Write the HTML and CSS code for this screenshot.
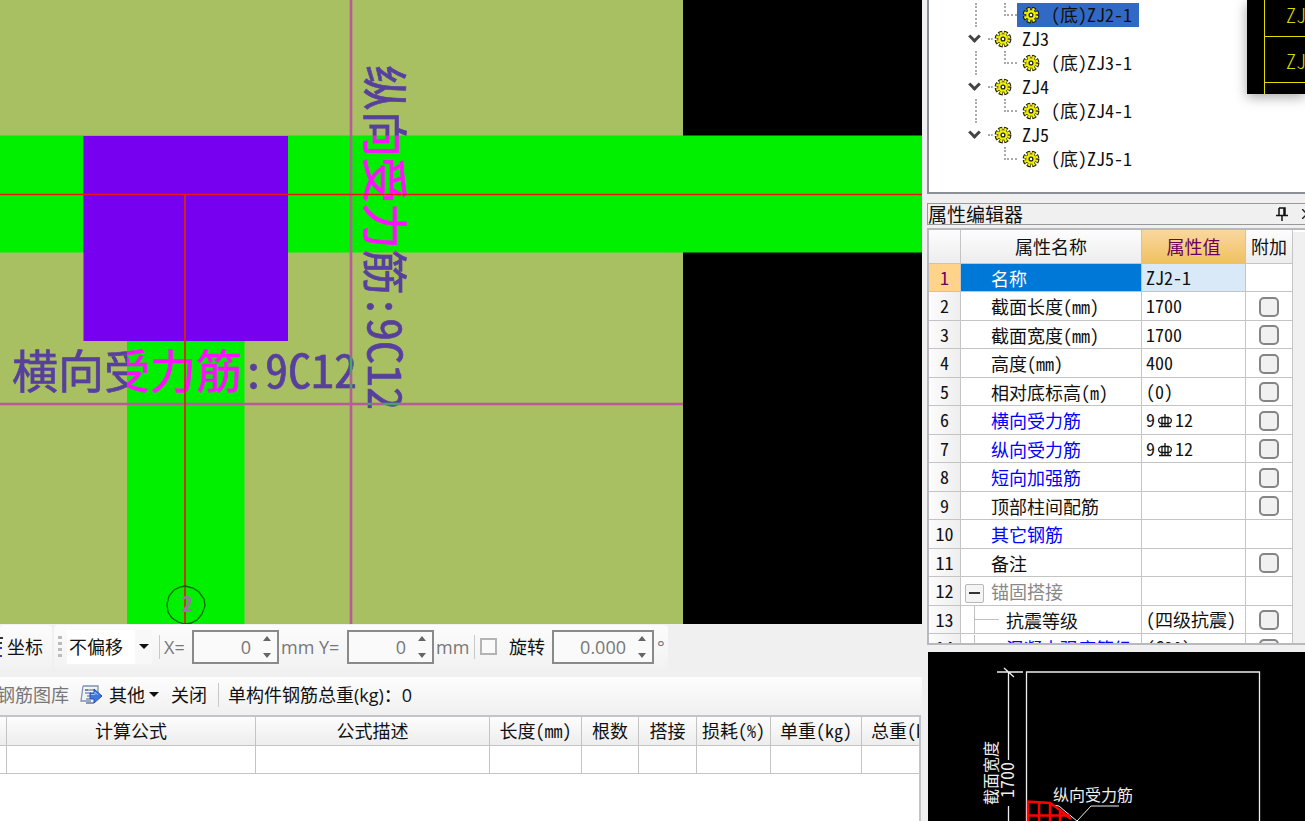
FILE: index.html
```
<!DOCTYPE html>
<html lang="zh-CN">
<head>
<meta charset="utf-8">
<title>属性编辑器</title>
<link rel="stylesheet" href="styles.css">
</head>
<body>
<svg class="defs" aria-hidden="true">
  <symbol id="gear" viewBox="0 0 18 18">
    <circle cx="9" cy="9" r="6.4" fill="none" stroke="#1c1c00" stroke-width="4" stroke-dasharray="3.600 1.426"/>
    <circle cx="9" cy="9" r="5.200" fill="#f0f000" stroke="#2c2c00" stroke-width=".7"/>
    <circle cx="9" cy="9" r="5.900" fill="none" stroke="#f4f400" stroke-width="2.800" stroke-dasharray="2.200 2.434" stroke-dashoffset="-.6"/>
    <circle cx="9" cy="9" r="1.900" fill="#fff" stroke="#222" stroke-width="1.300"/>
  </symbol>
  <symbol id="rebar" viewBox="0 0 16 16">
    <path d="M8 1v13M5 4v10M11 4v10M2 13.500h12M4 4.500h8q2.500 1 2.500 3t-2.500 3H4q-2.500-1-2.500-3t2.500-3" fill="none" stroke="#111" stroke-width="1.300"/>
  </symbol>
  <symbol id="spin" viewBox="0 0 10 24">
    <path d="M1 6l4-5 4 5zM1 18l4 5 4-5z" fill="#666"/>
  </symbol>
</svg>
<div class="app">
  <main class="work">
    <svg class="plan" viewBox="0 0 922 624" preserveAspectRatio="xMinYMin slice" role="img" aria-label="平面图">
      <rect width="922" height="624" fill="#000"/>
      <rect width="683" height="624" fill="#a8bf62"/>
      <path d="M0 135.500h922v117H0zM127 252h117.500v372H127z" fill="#00f000"/>
      <path d="M351 0v624M0 404h683" stroke="#b85a9c" stroke-width="2.600"/>
      <rect x="83.500" y="136" width="204.500" height="205" fill="#7800f0"/>
      <g class="invert">
        <text class="plan-text" x="12" y="388">横向受力筋:9C12</text>
        <text class="plan-text" transform="translate(368 65) rotate(90)">纵向受力筋:9C12</text>
      </g>
      <path d="M0 194.500h922" stroke="#f01414" stroke-width="1.600"/>
      <path d="M185 195v429" stroke="#d22a10" stroke-width="1.800"/>
      <path d="M185 586l8 2 6 4 5 7 1 7-3 8-5 6-6 3-6 1-7-2-6-4-4-6-1-8 2-8 5-6 6-3z" fill="none" stroke="#006800" stroke-width="1.300"/>
      <text class="axis-text" x="187" y="612">2</text>
    </svg>
    <div class="bar offset-bar">
      <div class="group first">
        <svg class="cut" viewBox="0 0 3 20"><path d="M0 1h3M0 6h2" stroke="#333" stroke-width="2"/><path d="M0 11h2M0 19h2" stroke="#33d" stroke-width="2"/></svg>
        <button class="txt">坐标</button>
      </div>
      <div class="group second">
        <i class="grip"></i>
        <span class="combo"><select aria-label="偏移方式"><option>不偏移</option></select><i class="down"></i></span>
        <i class="sep"></i>
        <label class="unit x" for="dx">X=</label>
        <span class="spin"><input id="dx" value="0"><svg><use href="#spin"/></svg></span>
        <span class="unit mm">mm</span>
        <label class="unit y" for="dy">Y=</label>
        <span class="spin"><input id="dy" value="0"><svg><use href="#spin"/></svg></span>
        <span class="unit mm">mm</span>
        <i class="sep late"></i>
        <input class="rot" type="checkbox" id="rot"><label class="rot-label" for="rot">旋转</label>
        <span class="spin wide"><input aria-label="角度" value="0.000"><svg><use href="#spin"/></svg></span>
        <span class="unit deg">°</span>
      </div>
    </div>
    <div class="bar lib-bar">
      <button class="txt off">钢筋图库</button>
      <svg class="export" viewBox="0 0 22 20"><path d="M3 1h15v7M3 1L1 16h10" fill="#eef2f8" stroke="#7f93ae" stroke-width="1.300"/><path d="M5 5h9M5 8h6M7 11h4M6 14h4" stroke="#8092ac" stroke-width="1.500"/><path d="M5 5h3M6 18h8" stroke="#647a9c" stroke-width="1.500"/><path d="M10 8h4V4l8 7-8 7v-4h-4z" fill="#3f78dc" stroke="#2450ae"/><path d="M11 9.500h4V7l3 3" fill="none" stroke="#9fc2f5"/></svg>
      <button class="txt">其他</button><i class="down menu"></i>
      <button class="txt close">关闭</button>
      <i class="sep"></i>
      <span class="total">单构件钢筋总重(kg)：0</span>
    </div>
    <div class="sheet-frame">
      <table class="sheet">
        <colgroup><col class="c0"><col class="c1"><col class="c2"><col class="c3"><col class="c4"><col class="c5"><col class="c6"><col class="c7"><col></colgroup>
        <thead><tr><th></th><th>计算公式</th><th>公式描述</th><th>长度(mm)</th><th>根数</th><th>搭接</th><th>损耗(%)</th><th>单重(kg)</th><th class="cutoff">总重(kg)</th></tr></thead>
        <tbody><tr><td></td><td></td><td></td><td></td><td></td><td></td><td></td><td></td><td></td></tr></tbody>
      </table>
    </div>
  </main>
  <aside class="side">
    <section class="tree-panel">
      <ul class="tree">
        <li class="node"><i class="arrow"></i><i class="dots"></i><svg class="gear"><use href="#gear"/></svg><span>ZJ2</span></li>
        <li class="leaf"><i class="elbow"></i><span class="pick on"><svg class="gear"><use href="#gear"/></svg><span>(底)ZJ2-1</span></span></li>
        <li class="node"><i class="arrow"></i><i class="dots"></i><svg class="gear"><use href="#gear"/></svg><span>ZJ3</span></li>
        <li class="leaf"><i class="elbow"></i><span class="pick"><svg class="gear"><use href="#gear"/></svg><span>(底)ZJ3-1</span></span></li>
        <li class="node"><i class="arrow"></i><i class="dots"></i><svg class="gear"><use href="#gear"/></svg><span>ZJ4</span></li>
        <li class="leaf"><i class="elbow"></i><span class="pick"><svg class="gear"><use href="#gear"/></svg><span>(底)ZJ4-1</span></span></li>
        <li class="node"><i class="arrow"></i><i class="dots"></i><svg class="gear"><use href="#gear"/></svg><span>ZJ5</span></li>
        <li class="leaf last"><i class="elbow"></i><span class="pick"><svg class="gear"><use href="#gear"/></svg><span>(底)ZJ5-1</span></span></li>
      </ul>
    </section>
    <header class="title"><h2>属性编辑器</h2>
      <button aria-label="固定"><svg class="pin" viewBox="0 0 12 14"><path d="M3 1h6v7M3 1v7M0 8.500h12M6 9v5M8 1v7" fill="none" stroke="#111" stroke-width="1.500"/></svg></button>
      <button aria-label="关闭"><svg class="x-icon" viewBox="0 0 10 10"><path d="M0 0l10 10M10 0L0 10" stroke="#222" stroke-width="1.500"/></svg></button>
    </header>
    <section class="props-frame">
      <table class="props">
        <colgroup><col class="p0"><col class="p1"><col class="p2"><col class="p3"></colgroup>
        <thead><tr><th></th><th>属性名称</th><th class="hot">属性值</th><th>附加</th></tr></thead>
        <tbody>
          <tr class="current"><th>1</th><td>名称</td><td>ZJ2-1</td><td></td></tr>
          <tr><th>2</th><td>截面长度(mm)</td><td>1700</td><td><input type="checkbox" aria-label="附加 截面长度"></td></tr>
          <tr><th>3</th><td>截面宽度(mm)</td><td>1700</td><td><input type="checkbox" aria-label="附加 截面宽度"></td></tr>
          <tr><th>4</th><td>高度(mm)</td><td>400</td><td><input type="checkbox" aria-label="附加 高度"></td></tr>
          <tr><th>5</th><td>相对底标高(m)</td><td>(0)</td><td><input type="checkbox" aria-label="附加 相对底标高"></td></tr>
          <tr class="blue"><th>6</th><td>横向受力筋</td><td>9<svg class="rebar"><use href="#rebar"/></svg>12</td><td><input type="checkbox" aria-label="附加 横向受力筋"></td></tr>
          <tr class="blue"><th>7</th><td>纵向受力筋</td><td>9<svg class="rebar"><use href="#rebar"/></svg>12</td><td><input type="checkbox" aria-label="附加 纵向受力筋"></td></tr>
          <tr class="blue"><th>8</th><td>短向加强筋</td><td></td><td><input type="checkbox" aria-label="附加 短向加强筋"></td></tr>
          <tr><th>9</th><td>顶部柱间配筋</td><td></td><td><input type="checkbox" aria-label="附加 顶部柱间配筋"></td></tr>
          <tr class="blue"><th>10</th><td>其它钢筋</td><td></td><td></td></tr>
          <tr><th>11</th><td>备注</td><td></td><td><input type="checkbox" aria-label="附加 备注"></td></tr>
          <tr class="parent"><th>12</th><td><button class="fold" aria-label="折叠"></button>锚固搭接</td><td></td><td></td></tr>
          <tr class="child"><th>13</th><td><div class="sub"><i class="branch"></i>抗震等级</div></td><td>(四级抗震)</td><td><input type="checkbox" aria-label="附加 抗震等级"></td></tr>
          <tr class="child blue"><th>14</th><td><div class="sub"><i class="branch"></i>混凝土强度等级</div></td><td>(C30)</td><td><input type="checkbox" aria-label="附加 混凝土强度等级"></td></tr>
        </tbody>
      </table>
      <div class="scroll"></div>
    </section>
    <svg class="preview" viewBox="0 0 377 169" preserveAspectRatio="xMinYMin slice" role="img" aria-label="截面图">
      <rect width="377" height="169" fill="#000"/>
      <g fill="none" stroke="#eee" stroke-width="1.300">
        <path d="M98.500 169V20h233v149M69 20h26M76 16l10 9M80.500 20v88M80.500 154v15"/>
        <path d="M124 153l7 1 7 6 11 9 14-15h28" stroke-width="1"/>
      </g>
      <path d="M100 169V149.500l22 1.500 10 7 11 9M100 163.500h42M111 150v19M122 151v18M132 158v11" fill="none" stroke="#f00" stroke-width="2.500"/>
      <text class="note" x="125" y="149">纵向受力筋</text>
      <text class="note" transform="translate(69 153) rotate(-90)">截面宽度</text>
      <text class="dim" transform="translate(86 146) rotate(-90)">1700</text>
    </svg>
    <svg class="float" viewBox="0 0 58 94" role="img" aria-label="图表">
      <rect width="58" height="94" fill="#000"/>
      <path d="M17.500 0v94M17 36.500h41M17 82.500h41" stroke="#e0e000" fill="none"/>
      <text class="cad" x="39" y="23">ZJ</text>
      <text class="cad" x="39" y="69">ZJ</text>
    </svg>
  </aside>
</div>
</body>
</html>
```
FILE: styles.css
```
* { box-sizing: border-box; }
html, body { height: 100%; margin: 0; overflow: hidden; }
body {
  background: #f0f0f0;
  color: #111;
  font: 18px/24px "Noto Sans CJK SC", sans-serif;
}
button { border: 0; padding: 0; background: none; font: inherit; color: inherit; }
i { flex: none; }
.defs { position: absolute; width: 0; height: 0; }

.app { display: flex; height: 100vh; }
.work { flex: 1; min-width: 0; display: flex; flex-direction: column; }
.side { position: relative; width: 378px; margin-left: 5px; flex: none; display: flex; flex-direction: column; }

/* Drawing area */
.plan { display: block; width: 100%; flex: 1; min-height: 0; isolation: isolate; }
.invert { mix-blend-mode: difference; }
.plan-text { font-size: 46px; font-feature-settings: "hwid"; fill: #fff; stroke: #fff; stroke-width: .6px; }
.axis-text { font-size: 22px; font-weight: 700; text-anchor: middle; font-feature-settings: "hwid"; fill: #a070a8; }

/* Toolbars */
.bar { display: flex; align-items: center; flex: none; font-family: "Open Sans", "Noto Sans CJK SC", sans-serif; }
.offset-bar { height: 53px; padding-bottom: 8px; }
.group { display: flex; align-items: center; height: 44px; background: linear-gradient(#fcfcfc, #f2f2f2); border-radius: 4px; }
.first { width: 52px; margin-right: 2px; }
.second { padding: 0 3px; }
.cut { width: 3px; height: 20px; margin-right: 4px; }
.grip { width: 4px; height: 22px; margin: 0 5px 0 1px; background: repeating-linear-gradient(#bbb 0 3px, transparent 3px 6px); }
.combo { display: flex; align-items: center; width: 85px; height: 34px; background: linear-gradient(90deg, #fff 0 68px, #f8f8f8 68px); }
.combo select { width: 68px; height: 34px; padding: 0 0 0 2px; border: 0; appearance: none; background: none; color: #111; font: inherit; }
.down { width: 0; height: 0; margin-left: 4px; border: 5px solid transparent; border-top: 5px solid #111; border-bottom: 0; }
.sep { width: 1px; height: 24px; margin: 0 4px 0 7px; background: #c8c8c8; }
.sep.late { margin: 0 5px 0 7px; }
.unit { flex: none; color: #777; }
.unit.x { width: 28px; }
.unit.y { width: 28px; }
.unit.mm { width: 40px; padding-left: 2px; }
.unit.mm + .sep { margin-left: 0; }
.unit.deg { padding-left: 3px; }
.spin { display: flex; align-items: center; flex: none; width: 87px; height: 34px; border: 2px solid #8a8a8a; background: #fafafa; }
.spin.wide { width: 102px; }
.spin input { flex: 1; min-width: 0; height: 28px; border: 0; padding: 0; background: none; text-align: right; font: inherit; color: #777; }
.spin svg { width: 10px; height: 24px; margin: 0 5px 0 11px; }
.rot { appearance: none; flex: none; width: 17px; height: 17px; margin: 0 12px 0 0; border: 2px solid #b4b4b4; background: #fafafa; }
.rot-label { width: 43px; }
.lib-bar { height: 38px; padding-bottom: 3px; overflow: hidden; background: linear-gradient(#fdfdfd, #f0f0f0); white-space: nowrap; }
.off { color: #777; margin-left: -3px; }
.export { width: 22px; height: 20px; margin: 0 7px 0 11px; flex: none; }
.close { margin: 0 4px 0 12px; }
.total { margin-left: 5px; }

/* Tables */
.sheet-frame { height: 106px; flex: none; margin-right: 1px; overflow: hidden; background: #fff; border-top: 2px solid #c4c4c8; border-right: 2px solid #c4c4c8; }
table { border-collapse: separate; border-spacing: 0; table-layout: fixed; font-feature-settings: "hwid"; white-space: nowrap; }
th, td { padding: 0; font-weight: 400; border-right: 1px solid #c4c4c4; border-bottom: 1px solid #c4c4c4; overflow: hidden; }
.sheet { width: 100%; }
.sheet thead tr { height: 29px; }
.sheet tbody tr { height: 28px; }
.sheet th { padding-bottom: 2px; }
thead th { background: linear-gradient(#fdfdfd, #ededed); }
.c0 { width: 7px; } .c1 { width: 249px; } .c2 { width: 234px; } .c3 { width: 92px; }
.c4 { width: 57px; } .c5 { width: 58px; } .c6 { width: 74px; } .c7 { width: 91px; }
.sheet .cutoff { text-align: left; padding-left: 9px; }
.sheet th:last-child, .sheet td:last-child { border-right: 0; }

/* Component tree */
.tree-panel { height: 194px; flex: none; overflow: hidden; display: flex; flex-direction: column; justify-content: flex-end; background: #fff; border: 1px solid #8c9096; border-width: 0 0 2px 2px; }
.tree { list-style: none; margin: 0; padding: 0 0 21px 38px; font-feature-settings: "hwid"; }
.tree li { display: flex; align-items: center; height: 24px; }
.tree li span span, .node > span { padding-bottom: 2px; }
.arrow { width: 9px; height: 9px; margin: 0 9px 6px 3px; border: solid #444; border-width: 0 3px 3px 0; transform: rotate(45deg); }
.dots { width: 5px; margin-right: 2px; border-top: 2px dotted #aaa; }
.gear { width: 18px; height: 18px; flex: none; }
.node .gear { margin: 0 10px 0 -1px; }
.leaf { border-left: 2px dotted #aaa; margin-left: 8px; }
.leaf.last { border-left-color: transparent; }
.elbow { width: 13px; height: 13px; margin: 0 0 11px 27px; border: dotted #aaa; border-width: 0 0 2px 2px; }
.pick { display: flex; align-items: center; gap: 11px; height: 24px; padding: 0 7px 0 5px; }
.pick.on { background: #316ac5; }

/* Property editor */
.title { display: flex; align-items: center; height: 22px; flex: none; margin-top: 9px; border: 1px solid #999; border-width: 1px 0 1px 1px; overflow: hidden; }
.title h2 { flex: 1; margin: 0; font-size: 19px; line-height: 20px; font-weight: 400; }
.title button { display: flex; flex: none; margin-right: 14px; }
.title button:last-child { margin-right: -7px; }
.pin { width: 12px; height: 14px; }
.x-icon { width: 10px; height: 10px; }
.props-frame { display: flex; height: 417px; flex: none; margin-top: 3px; overflow: hidden; border: 2px solid #b8b8be; border-right: 0; background: #fff; }
.props { flex: 1; width: 0; }
.scroll { width: 12px; margin-top: 2px; background: #f0f0f0; }
.p0 { width: 32px; } .p1 { width: 181px; } .p2 { width: 104px; }
.props thead tr { height: 34px; }
.props thead th { padding-bottom: 2px; }
.props tbody tr { height: 28px; }
.props tbody tr:nth-child(even) { height: 29px; }
.props tbody th { padding-bottom: 2px; background: linear-gradient(90deg, #fcfcfc, #eee); }
.props td { line-height: 22px; }
.props td:nth-child(2) { padding-left: 30px; }
.props td:nth-child(3) { padding: 0 0 2px 4px; }
.props td:nth-child(4) { padding-top: 1px; }
.props thead .hot { color: #6c005c; background: linear-gradient(#f9d7a0, #f1c160); }
.props .current th { color: #6c005c; background: #ffd48a; }
.current td:nth-child(2) { color: #fff; background: #0078d7; }
.current td:nth-child(3) { background: #d9e9f7; }
.blue td:nth-child(2) { color: #00f; }
.props td input { appearance: none; display: block; width: 20px; height: 20px; margin: 0 auto; border: 2px solid #858585; border-radius: 5px; background: #f1f1f1; }
.rebar { width: 16px; height: 16px; margin: 0 2px; vertical-align: -2px; }
.props .parent td:nth-child(2) { padding-left: 4px; color: #888; }
.fold { width: 19px; height: 19px; margin-right: 7px; vertical-align: -3px; border: 1px solid #b8b8b8; border-radius: 2px; background: linear-gradient(#333, #333) center / 11px 2px no-repeat #f4f4f4; }
.props .child td:nth-child(2) { padding-left: 13px; }
.sub { display: flex; align-items: center; height: 27px; }
.branch { width: 25px; height: 27px; margin-right: 7px; border-left: 1px solid #c0c0c0; background: linear-gradient(#c0c0c0, #c0c0c0) center / 100% 1px no-repeat; }

/* Section preview */
.preview { display: block; width: 377px; flex: 1; min-height: 0; margin: 7px 0 0 1px; }
.note { font-size: 16px; fill: #eee; }
.dim { font-size: 18px; font-feature-settings: "hwid"; fill: #eee; }
.float { position: absolute; top: 0; right: 0; width: 58px; height: 94px; box-shadow: 0 3px 12px rgba(0, 0, 0, .35); }
.cad { font-size: 20px; font-weight: 300; font-feature-settings: "hwid"; fill: #d8d800; }
```
